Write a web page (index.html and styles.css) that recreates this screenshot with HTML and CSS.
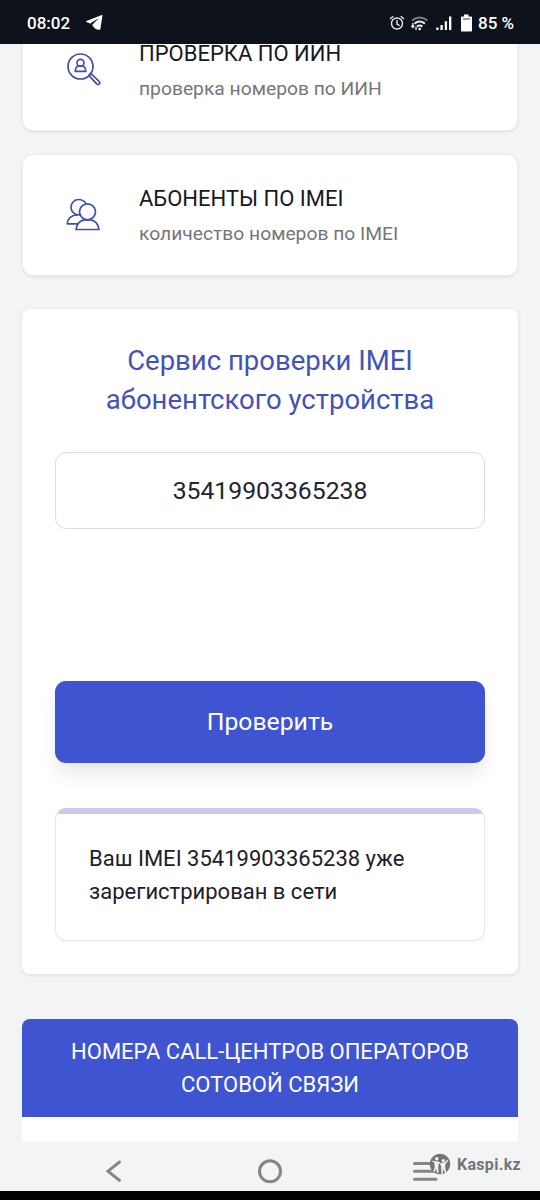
FILE: index.html
```html
<!DOCTYPE html>
<html lang="ru">
<head>
<meta charset="utf-8">
<title>Проверка IMEI</title>
<link rel="stylesheet" href="styles.css">
</head>
<body>
<div class="phone">
  <header class="status">
    <span class="time">08:02</span>
    <svg class="telegram" width="17" height="15" viewBox="0 0 17 15"><path fill="#fff" d="M15.8 0 .4 6.100c-.6.3-.6.8 0 1l3.700 1.300 5.600 5.600c.4.4 3 .8 3.800.8.5 0 .8-.3.900-.8L16.400.7c.1-.5-.1-.8-.6-.7z"/><path d="M4.500 8.300 13 3 6.500 9.400 6.200 13z" fill="#0e121b"/><path d="m4.100 8.400 1.900 4.400-4-1z" fill="#0e121b"/></svg>
    <svg class="indicators" width="84" height="20" viewBox="0 0 84 20" fill="none" stroke="#e8e9ec" stroke-width="1.4">
      <circle cx="8" cy="10.5" r="5.5"/><path d="M8 7v4l2.600 1.600M1.100 6 4.200 3.200M14.900 6l-3.100-2.800"/>
      <g stroke-width="2"><path stroke="#777a82" d="M23 7.500q7.700-6 15.400 0"/><path d="M25.500 10.600q5.200-4.200 10.400 0M28 13.600q2.700-2.200 5.400 0"/></g>
      <circle cx="30.700" cy="16" r="1.300" fill="#fff" stroke="none"/><path d="M23.800 10v4.300m-1.500-1.600 1.500 1.800 1.500-1.800M27 17v-3.300"/>
      <path stroke="#fff" stroke-width="2.300" d="M48.400 17v-2.600M52.600 17v-5M56.900 17V8.300M61.200 17V3.500"/>
      <path fill="#fff" stroke="none" d="M75 1.500h4.500v2H82c.6 0 1 .4 1 1v13c0 .6-.4 1-1 1h-9c-.6 0-1-.4-1-1v-13c0-.6.4-1 1-1h2z"/><path stroke="#555963" stroke-width="1.200" d="M74 6h7"/>
    </svg>
    <span class="percent">85 %</span>
  </header>
  <main class="page">
    <section class="service">
      <svg class="service-icon" width="36" height="36" viewBox="0 0 36 36" fill="none" stroke="#414fa8" stroke-width="1.7" stroke-linejoin="round"><circle cx="14.5" cy="14.5" r="12.5"/><circle cx="14.5" cy="10.8" r="3.5"/><path d="M9.300 19.400c0-3.200 1.600-5.200 3.400-5.400h3.600c1.800.2 3.400 2.200 3.400 5.400zM22.800 23.300l2-2 8.400 8.200c.9 1 .8 2-.1 2.600-.8.6-1.600.5-2.400-.3z"/></svg>
      <div><h2>ПРОВЕРКА ПО ИИН</h2><p>проверка номеров по ИИН</p></div>
    </section>
    <section class="service">
      <svg class="service-icon" width="36" height="36" viewBox="0 -1.500 36 36" fill="none" stroke="#414fa8" stroke-width="1.700" stroke-linejoin="round"><circle cx="21.500" cy="13.300" r="8"/><path d="M10 31c.5-5.500 4.200-9.700 9-9.700h5c4.800 0 8.500 4.200 9 9.700zM20 5.100C18.300 2.300 15.800 1 12.700 1 8.500 1 5 4.400 5 8.700c0 4.300 3.500 7.700 7.700 7.700l1.900-.2M11.500 25.300H1.300c.2-5.200 4.200-8.900 10.200-8.900"/></svg>
      <div><h2>АБОНЕНТЫ ПО IMEI</h2><p>количество номеров по IMEI</p></div>
    </section>
    <section class="checker">
      <h1><span>Сервис проверки IMEI</span><br><span>абонентского устройства</span></h1>
      <div class="field"><span>35419903365238</span></div>
      <button class="submit"><span>Проверить</span></button>
      <div class="result"><span>Ваш IMEI 35419903365238 уже</span><br><span>зарегистрирован в сети</span></div>
    </section>
    <section class="centers"><h2><span>НОМЕРА CALL-ЦЕНТРОВ ОПЕРАТОРОВ</span><br><span>СОТОВОЙ СВЯЗИ</span></h2></section>
  </main>
  <nav class="navigation">
    <svg width="540" height="49" viewBox="0 0 540 49" fill="none" stroke="#858588" stroke-width="3" stroke-linecap="round"><path d="m119.500 20-11.500 9.200 11.500 9.200"/><circle cx="270" cy="29.300" r="10.500"/><path d="M414.500 21.500H436M414.500 29.300H436M414.500 37.200H436"/></svg>
    <div class="watermark">
      <svg width="22" height="22" viewBox="0 0 22 22"><circle cx="11" cy="11" r="10.300" fill="#747477"/><g fill="#f3f4f6"><circle cx="7.800" cy="5.800" r="1.700"/><path d="m2.500 7.500 4 .8 2.800.3 2.400 1.200-2 1.300-.5 3.500.4 5-1.400.4-1.200-4.500-1.200 3.500-1.400-.8 1.300-4-.3-4.200z"/><circle cx="14.300" cy="7.600" r="1.600"/><path d="m11 10.500 2-.8 2.500-.1 3.200-3.100.4 1.100-2.700 3.600-.2 3.800 1.100 4-1.300.8-1.700-3.900-.6 5-1.200.1-.4-7.500z"/></g></svg>
      <span>Kaspi.kz</span>
    </div>
  </nav>
</div>
</body>
</html>
```
FILE: styles.css
```css
* { box-sizing: border-box; }
body { margin: 0; background: #000; font-family: Roboto, sans-serif; }
h1, h2, p { margin: 0; font-weight: 400; }
.phone { width: 540px; height: 1200px; overflow: hidden; background: #000; }
.status { height: 44px; display: flex; align-items: center; padding: 1px 27px 0; background: #0e121b; color: #fff; font-weight: 500; font-size: 17px; }
.time { width: 43px; }
.telegram { margin-left: 16px; }
.indicators { margin-left: auto; margin-right: 5px; }
.percent { width: 35px; white-space: nowrap; }
.page { height: 1098px; overflow: hidden; padding: 0 22px; background: #f3f4f6; display: flow-root; }
.service { height: 122px; padding-left: 43px; display: flex; align-items: center; gap: 37px; background: #fff; border: 1px solid #edeef0; border-radius: 11px; box-shadow: 0 1px 3px #00000018; }
.service:first-child { margin-top: -35px; }
.service + .service { margin-top: 23px; }
.service h2 { font-size: 22px; line-height: 33px; color: #18191f; }
.service p { font-size: 19.25px; line-height: 28px; margin-top: 5px; color: #75767a; }
.service div { padding-bottom: 1px; }
.checker { height: 665px; margin-top: 33px; padding: 33px; background: #fff; border-radius: 8px; box-shadow: 0 1px 4px #0000001c; }
.checker h1 { font-size: 27.5px; line-height: 38.5px; text-align: center; color: #4353b5; white-space: nowrap; }
.field { height: 77px; margin-top: 33px; padding-bottom: 1px; display: flex; align-items: center; justify-content: center; border: 1px solid #dedede; border-radius: 11px; box-shadow: inset 0 1px 3px #00000008; font-size: 24.75px; color: #23252e; }
.submit { display: block; width: 100%; height: 82px; margin-top: 152px; padding: 0 0 2px; border: 0; border-radius: 11px; background: #3f54d1; color: #fff; font: 400 24.75px Roboto, sans-serif; box-shadow: 0 12px 20px -3px #0000001c; }
.result { height: 133px; margin-top: 45px; padding: 33px 33px 28px; border: 1px solid #e8e8ea; border-top-color: #cbcaed; border-radius: 11px; background: linear-gradient(#cbcaed 5px, #fff 5px); box-shadow: 0 1px 3px #0000000c; font-size: 22px; line-height: 33px; color: #1d202b; }
.centers { height: 140px; margin-top: 45px; background: #fff; border-radius: 8px 8px 0 0; }
.centers h2 { height: 98px; padding-top: 16px; background: #3f54d1; color: #fff; border-radius: 8px 8px 0 0; font-size: 22px; line-height: 33px; text-align: center; }
.navigation { position: relative; height: 49px; background: #f3f4f6; }
.navigation > svg { display: block; }
.watermark { position: absolute; left: 429px; top: 11px; display: flex; align-items: center; gap: 6px; color: #747477; font-size: 16px; letter-spacing: .3px; font-weight: 700; white-space: nowrap; }
```
